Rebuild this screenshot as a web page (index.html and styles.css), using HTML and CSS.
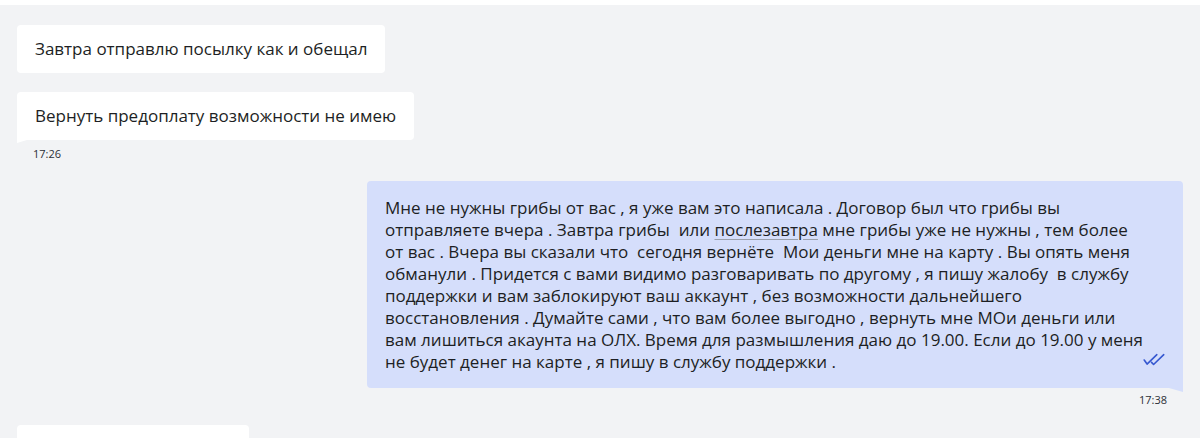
FILE: index.html
```html
<!DOCTYPE html>
<html lang="ru">
<head>
<meta charset="utf-8">
<link rel="stylesheet" href="styles.css">
</head>
<body>
<div class="topbar"></div>
<div class="chat">
  <div class="row in"><div class="bubble white">Завтра отправлю посылку как и обещал</div></div>
  <div class="row in"><div class="bubble white tail-left">Вернуть предоплату возможности не имею</div></div>
  <div class="time left">17:26</div>
  <div class="row out">
    <div class="bubble blue tail-right">
      <div class="text">Мне не нужны грибы от вас , я уже вам это написала . Договор был что грибы вы<br>отправляете вчера . Завтра грибы&nbsp; или <span class="spell">послезавтра</span> мне грибы уже не нужны , тем более<br>от вас . Вчера вы сказали что&nbsp; сегодня вернёте&nbsp; Мои деньги мне на карту . Вы опять меня<br>обманули . Придется с вами видимо разговаривать по другому , я пишу жалобу&nbsp; в службу<br>поддержки и вам заблокируют ваш аккаунт , без возможности дальнейшего<br>восстановления . Думайте сами , что вам более выгодно , вернуть мне МОи деньги или<br>вам лишиться акаунта на ОЛХ. Время для размышления даю до 19.00. Если до 19.00 у меня<br>не будет денег на карте , я пишу в службу поддержки .</div>
      <svg class="check" width="27" height="16" viewBox="0 0 27 16"><path d="M1.5 8 L5 13 L17 1.5 M10.5 11 L13 13.5 L25.5 1.5" fill="none" stroke="#3658d0" stroke-width="2" stroke-linecap="round" stroke-linejoin="round"/></svg>
    </div>
  </div>
  <div class="time right">17:38</div>
  <div class="row in"><div class="bubble white stub"></div></div>
</div>
</body>
</html>
```
FILE: styles.css
```css
html, body { margin: 0; padding: 0; }
body {
  background: #f2f3f5;
  font-family: "Open Sans", "Liberation Sans", sans-serif;
  color: #1d1f24;
  width: 1200px;
  height: 438px;
  overflow: hidden;
}
.topbar { height: 5px; background: #fff; }
.chat {
  display: flex;
  flex-direction: column;
  padding: 20px 17px 0 17px;
}
.row { display: flex; }
.row.out { justify-content: flex-end; margin-top: 20px; }
.row.in + .row.in { margin-top: 19px; }
.bubble {
  border-radius: 4px;
  font-size: 17px;
  line-height: 22px;
  position: relative;
}
.white {
  background: #fff;
  padding: 13px 18px 13px 18px;
}
.tail-left { border-bottom-left-radius: 0; }
.tail-left::after {
  content: "";
  position: absolute;
  left: 0;
  bottom: -3px;
  width: 10px;
  height: 3px;
  background: #fff;
  clip-path: polygon(0 0, 100% 0, 0 100%);
}
.blue {
  background: #d5defb;
  width: 816px;
  box-sizing: border-box;
  padding: 16px 18px 15px 18px;
  display: flex;
  align-items: flex-end;
}
.tail-right { border-bottom-right-radius: 0; }
.tail-right::after {
  content: "";
  position: absolute;
  right: 0;
  bottom: -4px;
  width: 14px;
  height: 4px;
  background: #d5defb;
  clip-path: polygon(0 0, 100% 0, 100% 100%);
}
.text { white-space: nowrap; }
.spell { text-decoration: underline; text-decoration-color: #9aa0ad; text-underline-offset: 3px; }
.check { margin-left: auto; margin-right: 0; margin-bottom: 5px; }
.time { font-size: 11px; line-height: 14px; color: #2b2f36; }
.time.left { margin: 7px 0 0 16px; }
.time.right { align-self: flex-end; margin: 5px 16px 0 0; }
.stub { width: 232px; height: 30px; padding: 0; margin-top: 18px; }
```
